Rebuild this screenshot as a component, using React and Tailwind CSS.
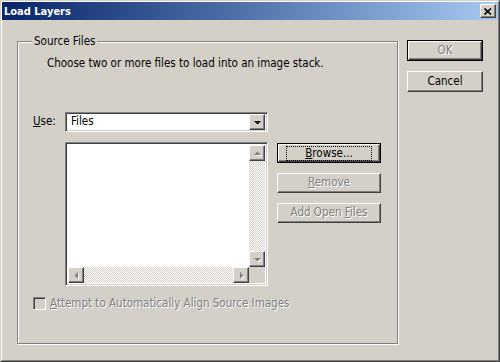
import React from "react";

const font = { fontFamily: '"DejaVu Sans Condensed", "DejaVu Sans", sans-serif' };

const raised =
  "border border-t-white border-l-white border-r-[#404040] border-b-[#404040] shadow-[inset_-1px_-1px_0_#808080]";
const sunken =
  "border border-t-[#808080] border-l-[#808080] border-r-white border-b-white shadow-[inset_1px_1px_0_#404040,inset_-1px_-1px_0_#d4d0c8]";
const disabledText = "text-[#808080] [text-shadow:1px_1px_0_#fff]";
const checker =
  "bg-[repeating-conic-gradient(#d4d0c8_0_25%,#ffffff_0_50%)] bg-[length:2px_2px]";

function Arrow({ dir, disabled }) {
  const fill = disabled ? "#808080" : "#000";
  const pts = {
    up: "3,8 10,8 6.5,4.5",
    down: "3,5 10,5 6.5,8.5",
    left: "8,3 8,10 4.5,6.5",
    right: "5,3 5,10 8.5,6.5",
  }[dir];
  return (
    <svg width="13" height="13" viewBox="0 0 13 13">
      {disabled && (
        <polygon points={pts} fill="#fff" transform="translate(1,1)" />
      )}
      <polygon points={pts} fill={fill} />
    </svg>
  );
}

function ScrollBtn({ dir, disabled }) {
  return (
    <div className={`w-[16px] h-[16px] bg-[#d4d0c8] flex items-center justify-center ${raised}`}>
      <Arrow dir={dir} disabled={disabled} />
    </div>
  );
}

function Button({ children, isDefault, disabled, focus, className = "" }) {
  const inner = (
    <div
      className={`flex-1 flex items-center justify-center bg-[#d4d0c8] ${raised} ${
        disabled ? disabledText : "text-black"
      }`}
    >
      {focus ? (
        <span className="border border-dotted border-black px-[18px] leading-[13px]">{children}</span>
      ) : (
        <span>{children}</span>
      )}
    </div>
  );
  return (
    <div
      className={`flex text-[11.5px] ${isDefault ? "border border-black" : ""} ${className}`}
    >
      {inner}
    </div>
  );
}

export default function App() {
  return (
    <div
      className="w-[500px] h-[362px] bg-[#d4d0c8] border border-t-[#d4d0c8] border-l-[#d4d0c8] border-r-[#404040] border-b-[#404040] flex"
      style={font}
    >
      <div className="flex-1 flex flex-col border border-t-white border-l-white border-r-[#808080] border-b-[#808080]">
        {/* Title bar */}
        <div className="h-[18px] flex items-center justify-between pl-[2px] pr-[2px] bg-gradient-to-r from-[#0a246a] to-[#a6caf0]">
          <span className="text-white font-bold text-[11px] leading-none">Load Layers</span>
          <div className={`w-[16px] h-[14px] bg-[#d4d0c8] flex items-center justify-center ${raised}`}>
            <svg width="8" height="7" viewBox="0 0 8 7">
              <path d="M0.5 0.5 L7 6.5 M7 0.5 L0.5 6.5" stroke="#000" strokeWidth="1.6" />
            </svg>
          </div>
        </div>

        {/* Body */}
        <div className="flex pl-[15px] pt-[21px]">
          {/* Group box */}
          <div className="relative w-[381px] h-[303px] border border-[#808080] shadow-[inset_1px_1px_0_#fff,1px_1px_0_#fff] text-[11.5px] text-black">
            <span className="absolute -top-[8px] left-[14px] px-[2px] bg-[#d4d0c8] leading-[14px]">
              Source Files
            </span>

            <div className="flex flex-col">
              <div className="pl-[29px] pt-[14px] leading-[14px]">
                Choose two or more files to load into an image stack.
              </div>

              {/* Use row */}
              <div className="flex items-center mt-[42px] pl-[15px]">
                <span className="w-[32px]">
                  <span className="underline">U</span>se:
                </span>
                <div className={`w-[203px] h-[20px] bg-white flex items-center pl-[5px] pr-[2px] ${sunken}`}>
                  <span className="flex-1">Files</span>
                  <ScrollBtn dir="down" />
                </div>
              </div>

              {/* List + buttons */}
              <div className="flex mt-[10px] pl-[47px]">
                <div className={`w-[203px] h-[144px] bg-white flex flex-col p-[2px] ${sunken}`}>
                  <div className="flex-1 flex">
                    <div className="flex-1 bg-white" />
                    <div className="w-[16px] flex flex-col">
                      <ScrollBtn dir="up" disabled />
                      <div className={`flex-1 ${checker}`} />
                      <ScrollBtn dir="down" disabled />
                    </div>
                  </div>
                  <div className="h-[16px] flex">
                    <ScrollBtn dir="left" disabled />
                    <div className={`flex-1 ${checker}`} />
                    <ScrollBtn dir="right" disabled />
                    <div className="w-[16px] bg-[#d4d0c8]" />
                  </div>
                </div>

                <div className="flex flex-col gap-[10px] ml-[9px] mt-[1px]">
                  <Button isDefault focus className="w-[104px] h-[20px]">
                    <span className="underline">B</span>rowse...
                  </Button>
                  <Button disabled className="w-[104px] h-[20px]">
                    <span className="underline">R</span>emove
                  </Button>
                  <Button disabled className="w-[104px] h-[20px]">
                    Add Open <span className="underline">F</span>iles
                  </Button>
                </div>
              </div>

              {/* Checkbox */}
              <div className="flex items-center mt-[9px] pl-[15px]">
                <div className="w-[13px] h-[13px] bg-[#d4d0c8] border border-t-[#808080] border-l-[#808080] border-r-white border-b-white shadow-[inset_1px_1px_0_#404040,inset_-1px_-1px_0_#d4d0c8]" />
                <span className={`ml-[4px] ${disabledText}`}>
                  <span className="underline">A</span>ttempt to Automatically Align Source Images
                </span>
              </div>
            </div>
          </div>

          {/* Right buttons */}
          <div className="flex flex-col gap-[10px] ml-[9px] -mt-[1px]">
            <Button isDefault disabled className="w-[76px] h-[21px]">
              OK
            </Button>
            <Button className="w-[76px] h-[21px]">Cancel</Button>
          </div>
        </div>
      </div>
    </div>
  );
}
